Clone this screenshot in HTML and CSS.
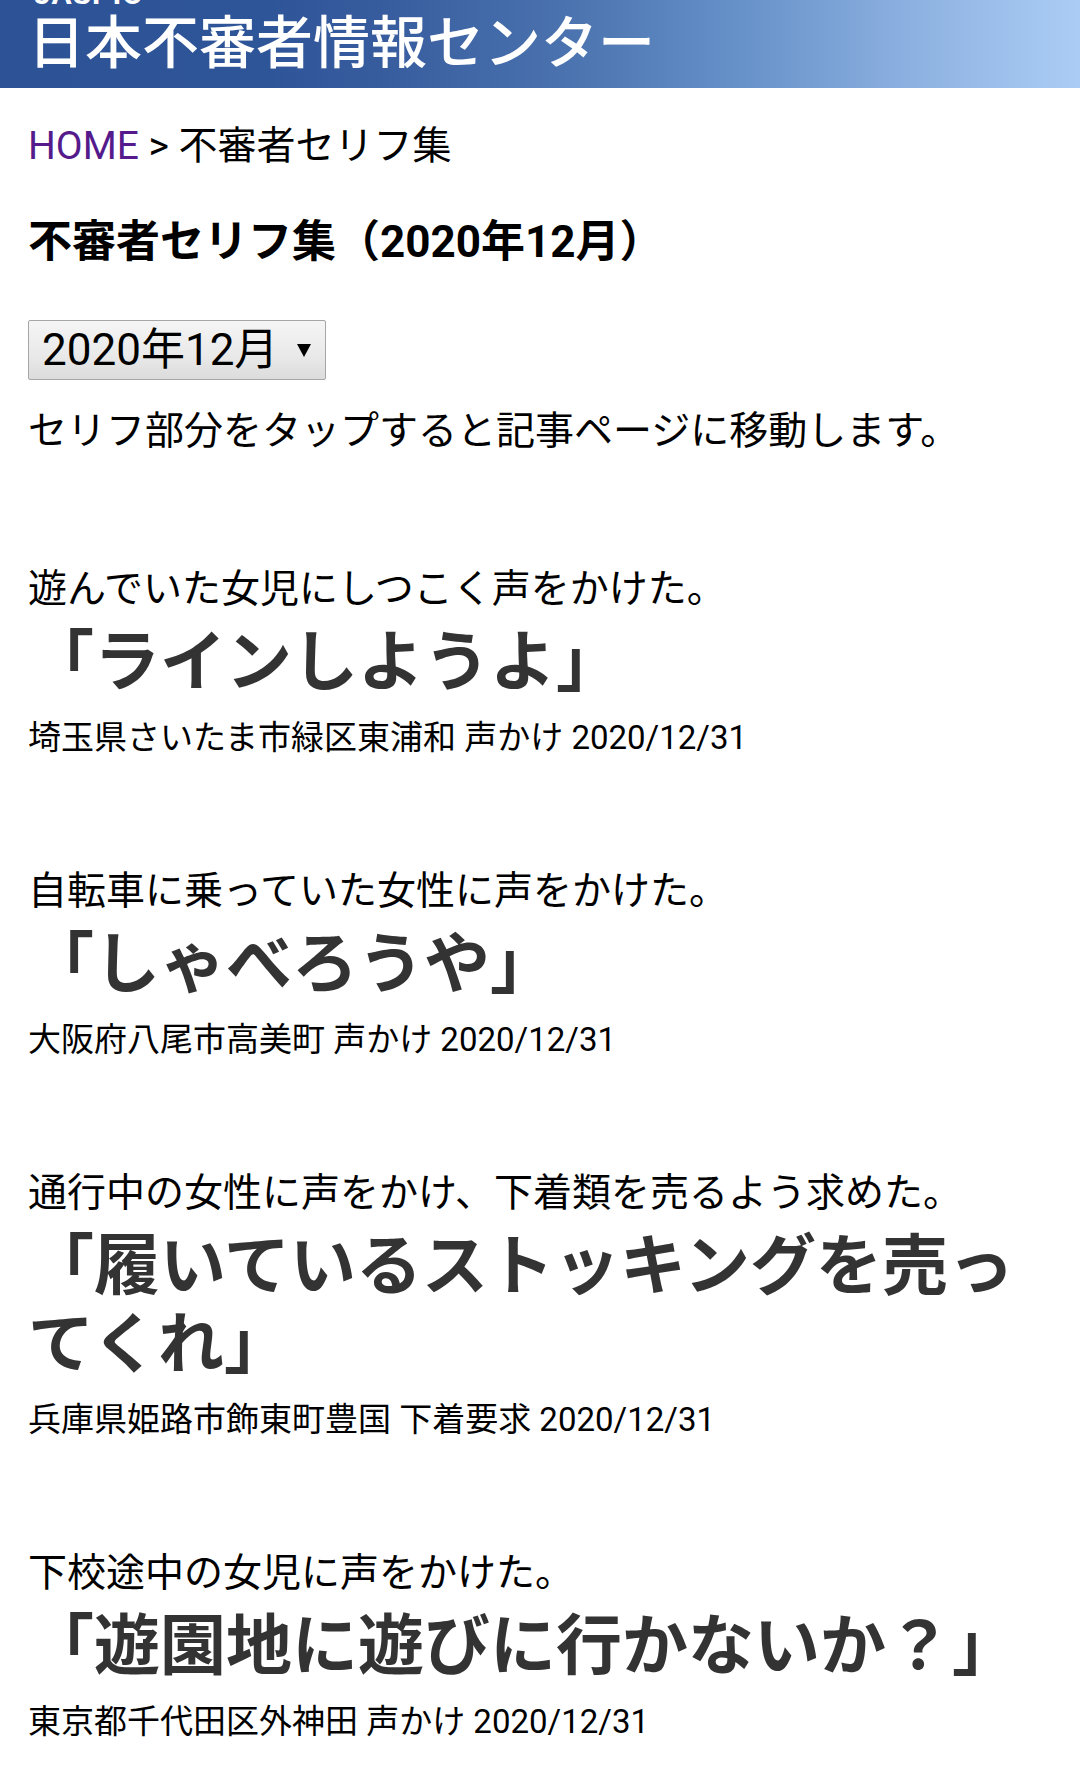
FILE: index.html
```html
<!DOCTYPE html>
<html lang="ja">
<head>
<meta charset="utf-8">
<title>不審者セリフ集（2020年12月）</title>
<link rel="stylesheet" href="styles.css">
</head>
<body>
<header class="site-header">
  <div class="brand-sub">JASPIC</div>
  <div class="brand">日本不審者情報センター</div>
</header>
<main class="content">
  <nav class="breadcrumb"><a class="crumb-link" href="#">HOME</a> &gt; 不審者セリフ集</nav>
  <h1 class="page-title">不審者セリフ集（2020年12月）</h1>
  <div class="month-select"><span class="month-label">2020年12月</span><span class="caret"></span></div>
  <p class="note">セリフ部分をタップすると記事ページに移動します。</p>
  <ul class="quotes">
    <li class="quote-item">
      <p class="situation">遊んでいた女児にしつこく声をかけた。</p>
      <p class="quote"><a class="quote-link" href="#">「ラインしようよ」</a></p>
      <p class="meta">埼玉県さいたま市緑区東浦和 声かけ 2020/12/31</p>
    </li>
    <li class="quote-item">
      <p class="situation">自転車に乗っていた女性に声をかけた。</p>
      <p class="quote"><a class="quote-link" href="#">「しゃべろうや」</a></p>
      <p class="meta">大阪府八尾市高美町 声かけ 2020/12/31</p>
    </li>
    <li class="quote-item">
      <p class="situation">通行中の女性に声をかけ、下着類を売るよう求めた。</p>
      <p class="quote"><a class="quote-link" href="#">「履いているストッキングを売ってくれ」</a></p>
      <p class="meta">兵庫県姫路市飾東町豊国 下着要求 2020/12/31</p>
    </li>
    <li class="quote-item">
      <p class="situation">下校途中の女児に声をかけた。</p>
      <p class="quote"><a class="quote-link" href="#">「遊園地に遊びに行かないか？」</a></p>
      <p class="meta">東京都千代田区外神田 声かけ 2020/12/31</p>
    </li>
  </ul>
</main>
</body>
</html>
```
FILE: styles.css
```css
html, body {
  margin: 0;
  padding: 0;
  background: #fff;
}

body {
  font-family: Roboto, "Noto Sans CJK JP", sans-serif;
  color: #000;
  font-size: 39px;
}

.site-header {
  height: 88px;
  overflow: hidden;
  padding-left: 28px;
  background: linear-gradient(90deg, #2d5396 0%, #2f5599 25%, #375c9e 35%, #4a72ae 52%, #6590c8 68%, #8cb0e0 84%, #abcdf5 100%);
  color: #fff;
}

.brand-sub {
  font-size: 30px;
  line-height: 30px;
  font-weight: 700;
  letter-spacing: 1px;
  margin-top: -21px;
  padding-left: 6px;
}

.brand {
  font-size: 57px;
  line-height: 64px;
  margin-top: 3px;
  font-weight: 500;
  white-space: nowrap;
}

.content {
  padding: 0 28px;
}

.breadcrumb {
  margin-top: 33px;
  font-size: 39px;
  line-height: 50px;
}

.crumb-link {
  color: #551a8b;
  text-decoration: none;
}

.page-title {
  margin: 43px 0 0;
  font-size: 44px;
  line-height: 56px;
  font-weight: 700;
}

.month-select {
  margin-top: 50px;
  width: 298px;
  height: 60px;
  box-sizing: border-box;
  border: 1px solid #a6a6a6;
  border-radius: 2px;
  background: linear-gradient(180deg, #f5f5f5 0%, #e9e9e9 60%, #dcdcdc 100%);
  display: flex;
  align-items: center;
  justify-content: space-between;
  padding: 0 14px 0 13px;
}

.month-label {
  font-size: 44px;
  line-height: 1;
}

.caret {
  width: 0;
  height: 0;
  border-left: 7.5px solid transparent;
  border-right: 7.5px solid transparent;
  border-top: 13px solid #000;
}

.note {
  margin: 26px 0 0;
  font-size: 39px;
  line-height: 50px;
}

.quotes {
  list-style: none;
  margin: 108px 0 0;
  padding: 0;
  display: flex;
  flex-direction: column;
  gap: 106px;
}

.situation {
  margin: 0;
  font-size: 39px;
  line-height: 50px;
}

.quote {
  margin: 10px 0 0;
  font-size: 66px;
  line-height: 78px;
  font-weight: 700;
  color: #333;
}

.quote-link {
  color: #333;
  text-decoration: none;
}

.meta {
  margin: 14px 0 0;
  font-size: 33px;
  line-height: 44px;
}
```
